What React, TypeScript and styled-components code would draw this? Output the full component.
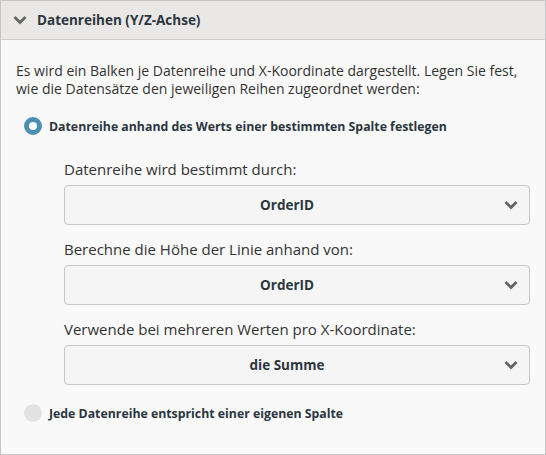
import React from "react";
import styled, { createGlobalStyle } from "styled-components";

const Global = createGlobalStyle`
  html, body { margin: 0; padding: 0; background: #ffffff; }
  body { font-family: "Open Sans", "Noto Sans", sans-serif; color: #333; }
  * { box-sizing: border-box; }
`;

const Panel = styled.div`
  width: 546px;
  height: 455px;
  border: 1px solid #c6c6c6;
  background: #f9f9f9;
  display: flex;
  flex-direction: column;
`;

const Header = styled.div`
  height: 39px;
  background: #e9e8e6;
  border-bottom: 1px solid #cfcfcf;
  display: flex;
  align-items: center;
  gap: 10px;
  padding-left: 12px;
  font-weight: 700;
  font-size: 13.5px;
  color: #2b3640;
`;

const Body = styled.div`
  padding: 22px 15px 0 15px;
  display: flex;
  flex-direction: column;
`;

const Intro = styled.p`
  margin: 0;
  font-size: 14px;
  line-height: 18px;
  color: #333;
`;

const RadioRow = styled.div<{ $top: number }>`
  display: flex;
  align-items: center;
  gap: 7px;
  margin-top: ${(p) => p.$top}px;
  padding-left: 8px;
  font-weight: 700;
  font-size: 12.3px;
  color: #2b3640;
`;

const Radio = styled.span<{ $checked?: boolean }>`
  width: 18px;
  height: 18px;
  border-radius: 50%;
  flex: none;
  background: ${(p) => (p.$checked ? "#fff" : "#e2e2e2")};
  border: ${(p) => (p.$checked ? "5px solid #4b8fb3" : "none")};
`;

const Options = styled.div`
  padding-left: 48px;
  display: flex;
  flex-direction: column;
`;

const Label = styled.div<{ $first?: boolean }>`
  font-size: 15px;
  line-height: 20px;
  margin-top: ${(p) => (p.$first ? 24 : 14)}px;
  margin-bottom: 6px;
  color: #333;
`;

const Select = styled.div`
  height: 40px;
  border: 1px solid #c8c8c8;
  border-radius: 4px;
  background: #f5f5f5;
  display: flex;
  align-items: center;
  position: relative;
  justify-content: center;
  padding-right: 20px;
  font-weight: 700;
  font-size: 13.5px;
  color: #2b3640;
`;

const Caret = styled.svg`
  position: absolute;
  right: 11px;
  top: 50%;
  margin-top: -5px;
`;

const Chevron = ({ color }: { color: string }) => (
  <svg width="14" height="10" viewBox="0 0 14 10">
    <path d="M1.5 2 L7 7.5 L12.5 2" fill="none" stroke={color} strokeWidth="2.8" />
  </svg>
);

const Dropdown = ({ value }: { value: string }) => (
  <Select>
    {value}
    <Caret width="14" height="10" viewBox="0 0 14 10">
      <path d="M1.5 2 L7 7.5 L12.5 2" fill="none" stroke="#666" strokeWidth="2.8" />
    </Caret>
  </Select>
);

export default function App() {
  return (
    <>
      <Global />
      <Panel>
        <Header>
          <Chevron color="#666" />
          Datenreihen (Y/Z-Achse)
        </Header>
        <Body>
          <Intro>
            Es wird ein Balken je Datenreihe und X-Koordinate dargestellt. Legen Sie fest,
            <br />
            wie die Datensätze den jeweiligen Reihen zugeordnet werden:
          </Intro>
          <RadioRow $top={19}>
            <Radio $checked />
            Datenreihe anhand des Werts einer bestimmten Spalte festlegen
          </RadioRow>
          <Options>
            <Label $first>Datenreihe wird bestimmt durch:</Label>
            <Dropdown value="OrderID" />
            <Label>Berechne die Höhe der Linie anhand von:</Label>
            <Dropdown value="OrderID" />
            <Label>Verwende bei mehreren Werten pro X-Koordinate:</Label>
            <Dropdown value="die Summe" />
          </Options>
          <RadioRow $top={19}>
            <Radio />
            Jede Datenreihe entspricht einer eigenen Spalte
          </RadioRow>
        </Body>
      </Panel>
    </>
  );
}
